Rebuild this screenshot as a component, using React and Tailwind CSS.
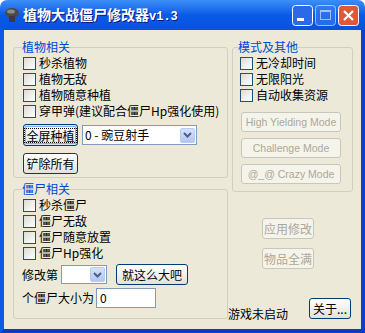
import React from "react";

const Check = ({ label }) => (
  <div className="flex items-center h-[16px]">
    <span className="w-[13px] h-[13px] shrink-0 border border-[#1c5180] bg-linear-to-br from-[#dcdcd7] to-white" />
    <span className="ml-[3px] text-[12px] leading-none whitespace-nowrap">{label}</span>
  </div>
);

const Btn = ({ children, className = "" }) => (
  <button className={"h-[21px] rounded-[3px] border border-[#003c74] bg-linear-to-b from-white to-[#e3e2d9] text-[12px] leading-none text-black flex items-center justify-center " + className}>
    {children}
  </button>
);

const OffBtn = ({ children, className = "" }) => (
  <button className={"h-[20px] rounded-[3px] border border-[#c9c7ba] bg-[#f5f4ea] text-[#aca899] leading-none flex items-center justify-center " + className}>
    {children}
  </button>
);

const Arrow = () => (
  <span className="w-[15px] h-[15px] mr-[1px] rounded-[2px] border border-[#b9c9ef] bg-linear-to-b from-[#d6e2fc] to-[#b2c6f6] flex items-center justify-center">
    <svg width="9" height="6" viewBox="0 0 9 6">
      <path d="M1 1 L4.5 4.5 L8 1" stroke="#4d6185" strokeWidth="2" fill="none" />
    </svg>
  </span>
);

const TitleButtons = () => (
  <div className="flex gap-[2px] mr-[6px]">
    <svg width="21" height="21" viewBox="0 0 21 21">
      <rect x="0.5" y="0.5" width="20" height="20" rx="3" fill="#2a6ae8" stroke="#fff" />
      <rect x="5" y="13" width="7" height="3" fill="#fff" />
    </svg>
    <svg width="21" height="21" viewBox="0 0 21 21" opacity="0.6">
      <rect x="0.5" y="0.5" width="20" height="20" rx="3" fill="#3b7cf0" stroke="#fff" />
      <rect x="5.5" y="5.5" width="10" height="9" fill="none" stroke="#fff" />
      <rect x="5" y="5" width="11" height="2" fill="#fff" />
    </svg>
    <svg width="21" height="21" viewBox="0 0 21 21">
      <rect x="0.5" y="0.5" width="20" height="20" rx="3" fill="#e0573a" stroke="#fff" />
      <path d="M6 6 L15 15 M15 6 L6 15" stroke="#fff" strokeWidth="2.2" />
    </svg>
  </div>
);

export default function App() {
  return (
    <div className="w-[365px] h-[333px] flex flex-col bg-white font-['Noto_Sans_CJK_SC',sans-serif] text-black">
      {/* title bar */}
      <div className="h-[30px] rounded-t-[7px] bg-linear-to-b from-[#3d8ef8] via-[#0a5ae8] to-[#0654dc] flex items-center">
        <svg width="16" height="16" viewBox="0 0 16 16" className="ml-[4px]">
          <ellipse cx="8" cy="6" rx="7" ry="5" fill="#4a4a4a" />
          <ellipse cx="7" cy="4.5" rx="4" ry="2" fill="#8c8c8c" />
          <rect x="5" y="9" width="6" height="6" rx="1" fill="#3a3a3a" />
        </svg>
        <span className="ml-[3px] text-[14px] font-bold text-white [text-shadow:1px_1px_0_#0a1a80] whitespace-nowrap">
          植物大战僵尸修改器<span className="font-['Liberation_Mono',monospace] text-[12px]">v1.3</span>
        </span>
        <div className="flex-1" />
        <TitleButtons />
      </div>

      {/* client */}
      <div className="flex-1 flex border-x-4 border-b-4 border-l-[#0b5ae8] border-r-[#0a3fcf] border-b-[#0a3cc8] bg-[#ece9d8] pl-[9px] pt-[10px]">
        {/* left column */}
        <div className="w-[215px] flex flex-col">
          <fieldset className="h-[138px] border border-[#d0d0bf] rounded-[3px] pl-[9px]">
            <legend className="text-[12px] leading-[14px] text-[#0046d5] -ml-[1px]">植物相关</legend>
            <div className="mt-[1px]">
              <Check label="秒杀植物" />
              <Check label="植物无敌" />
              <Check label="植物随意种植" />
              <Check label="穿甲弹(建议配合僵尸Hp强化使用)" />
            </div>
            <div className="flex items-center mt-[5px]">
              <Btn className="w-[55px] h-[22px] shadow-[inset_0_0_0_1px_#cee7ff,inset_0_0_0_2px_#89adf4]">
                <span className="border border-dotted border-black px-[1px] leading-[13px]">全屏种植</span>
              </Btn>
              <div className="ml-[4px] w-[115px] h-[20px] border border-[#7f9db9] bg-white flex items-center justify-between">
                <span className="ml-[2px] text-[12px] leading-none">0 - 豌豆射手</span>
                <Arrow />
              </div>
            </div>
            <Btn className="w-[55px] mt-[7px]">铲除所有</Btn>
          </fieldset>

          <fieldset className="h-[137px] mt-[4px] border border-[#d0d0bf] rounded-[3px] pl-[9px]">
            <legend className="text-[12px] leading-[14px] text-[#0046d5] -ml-[1px]">僵尸相关</legend>
            <div className="mt-[1px]">
              <Check label="秒杀僵尸" />
              <Check label="僵尸无敌" />
              <Check label="僵尸随意放置" />
              <Check label="僵尸Hp强化" />
            </div>
            <div className="flex items-center mt-[3px] -ml-[1px]">
              <span className="text-[12px] leading-none">修改第</span>
              <div className="ml-[3px] w-[46px] h-[19px] border border-[#7f9db9] bg-white flex items-center justify-end">
                <Arrow />
              </div>
              <Btn className="ml-[9px] w-[72px]">就这么大吧</Btn>
            </div>
            <div className="flex items-center mt-[3px] -ml-[1px]">
              <span className="text-[12px] leading-none">个僵尸大小为</span>
              <div className="ml-[2px] w-[60px] h-[20px] border border-[#7f9db9] bg-white flex items-center">
                <span className="ml-[3px] text-[12px] leading-none">0</span>
              </div>
            </div>
          </fieldset>
        </div>

        {/* right column */}
        <div className="ml-[4px] w-[121px] flex flex-col">
          <fieldset className="h-[152px] border border-[#d0d0bf] rounded-[3px] pl-[7px]">
            <legend className="text-[12px] leading-[14px] text-[#0046d5] -ml-[2px]">模式及其他</legend>
            <div className="mt-[1px]">
              <Check label="无冷却时间" />
              <Check label="无限阳光" />
              <Check label="自动收集资源" />
            </div>
            <div className="ml-[1px] mt-[9px] flex flex-col gap-[6px] font-['Liberation_Sans',sans-serif] text-[10.5px]">
              <OffBtn className="w-[100px]">High Yielding Mode</OffBtn>
              <OffBtn className="w-[100px]">Challenge Mode</OffBtn>
              <OffBtn className="w-[100px]">@_@ Crazy Mode</OffBtn>
            </div>
          </fieldset>

          <OffBtn className="mt-[26px] ml-[30px] w-[52px] h-[21px] text-[12px]">应用修改</OffBtn>
          <OffBtn className="mt-[9px] ml-[30px] w-[52px] h-[21px] text-[12px]">物品全满</OffBtn>

          <div className="flex-1" />
          <div className="flex items-end justify-between -ml-[4px] mr-[2px] mb-[10px]">
            <span className="text-[12px] leading-none mb-[-1px]">游戏未启动</span>
            <Btn className="w-[42px] h-[20px]">关于...</Btn>
          </div>
        </div>
      </div>
    </div>
  );
}
